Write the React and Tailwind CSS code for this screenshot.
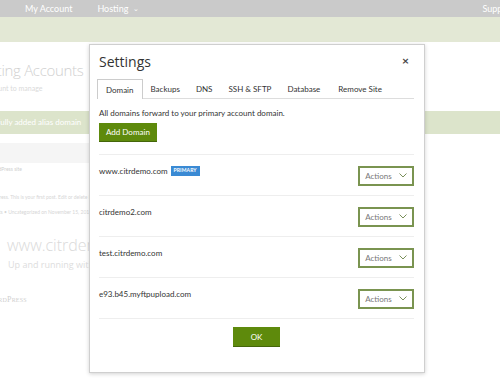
import React from 'react';

const domains = [
  { name: 'www.citrdemo.com', primary: true },
  { name: 'citrdemo2.com' },
  { name: 'test.citrdemo.com' },
  { name: 'e93.b45.myftpupload.com' },
];

const tabs = ['Domain', 'Backups', 'DNS', 'SSH & SFTP', 'Database', 'Remove Site'];

const Chevron = () => (
  <svg width="8" height="5" viewBox="0 0 8 5" fill="none" stroke="#7a8f5a" strokeWidth="1">
    <path d="M0.5 0.5 L4 4 L7.5 0.5" />
  </svg>
);

export default function App() {
  return (
    <div className="relative w-[500px] h-[383px] overflow-hidden bg-white" style={{ fontFamily: 'Lato, "Open Sans", sans-serif' }}>
      {/* pagina de fondo */}
      <div className="h-[17px] bg-[#cacaca] flex items-center text-white text-[9px] whitespace-nowrap">
        <span className="ml-[25px]">My Account</span>
        <span className="ml-[25px] flex items-center gap-[5px]">Hosting <span className="text-[7px]">⌄</span></span>
        <span className="ml-auto mr-[-14px]">Support</span>
      </div>
      <div className="h-[25px] bg-[#e3e8d5]" />

      <div className="pt-[21px] ml-[-29px] text-[#d0d0d0] font-light text-[15px] tracking-[-0.3px] leading-none whitespace-nowrap" style={{ fontFamily: '"Open Sans", sans-serif' }}>
        Hosting Accounts
      </div>
      <div className="mt-[5px] ml-[-50px] text-[#dadada] text-[7px] whitespace-nowrap">Choose an account to manage</div>

      <div className="mt-[17px] h-[23px] bg-[#dce4cb] flex items-center">
        <span className="ml-[-30px] text-white text-[8px] whitespace-nowrap">Successfully added alias domain</span>
      </div>

      <div className="mt-[9px] h-[20px] bg-[#f5f5f5] w-[200px]" />
      <div className="mt-[3px] ml-[-22px] text-[#cfcfcf] text-[5px] whitespace-nowrap">your WordPress site</div>
      <div className="mt-[21px] ml-[-16px] text-[#d6d6d6] text-[5px] whitespace-nowrap">WordPress. This is your first post. Edit or delete it</div>
      <div className="mt-[7px] ml-[-20px] text-[#d6d6d6] text-[5px] whitespace-nowrap">comments • Uncategorized on November 15, 2015</div>
      <div className="mt-[21px] ml-[7px] text-[#dadada] text-[16px] font-light leading-none whitespace-nowrap" style={{ fontFamily: '"Open Sans", sans-serif' }}>
        www.citrdemo.com
      </div>
      <div className="mt-[5px] ml-[8px] text-[#dddddd] text-[9px] whitespace-nowrap" style={{ fontFamily: '"Open Sans", sans-serif' }}>
        Up and running with WordPress
      </div>
      <div className="mt-[22px] ml-[-14px] text-[#cfcfcf] text-[8px] tracking-wide whitespace-nowrap" style={{ fontFamily: '"Liberation Serif", serif', fontVariant: 'small-caps' }}>
        WordPress
      </div>

      {/* Modal */}
      <div className="absolute left-[89px] top-[44px] w-[336px] h-[329px] bg-white border border-[#cfcfcf] shadow-[0_1px_4px_rgba(0,0,0,0.18)] pl-[9px] pr-[10px] flex flex-col">
        <div className="flex items-center justify-between h-[32px]">
          <span className="text-[14px] text-[#333]" style={{ fontFamily: '"Open Sans", sans-serif' }}>Settings</span>
          <span className="text-[12px] font-bold text-[#444] mr-[5px]">×</span>
        </div>

        <div className="mt-[2px] flex items-end border-b border-[#dddddd] h-[20px] text-[8px] text-[#333] whitespace-nowrap ml-[-2px]">
          {tabs.map((t, i) => (
            <div
              key={t}
              className={
                i === 0
                  ? 'h-[20px] px-[8px] flex items-center border border-b-0 border-[#cccccc] bg-white mb-[-1px]'
                  : i === 5
                  ? 'h-[19px] pl-[10px] pr-[8px] flex items-center'
                  : 'h-[19px] px-[8px] flex items-center'
              }
            >
              {t}
            </div>
          ))}
        </div>

        <div className="mt-[8px] h-[12px] flex items-center text-[8px] text-[#333]">All domains forward to your primary account domain.</div>
        <div className="mt-[4px] flex">
          <button className="h-[19px] px-[7px] bg-[#5e8a0c] text-white text-[8px] border-b border-[#44660a]">Add Domain</button>
        </div>

        <div className="mt-[12px] flex flex-col">
          {domains.map((d) => (
            <div key={d.name} className="h-[41px] border-t border-[#eeeeee] flex items-center justify-between">
              <div className="flex items-center gap-[3px] mt-[-8px] text-[8px] text-[#333]">
                {d.name}
                {d.primary && (
                  <span className="bg-[#3a8ad4] text-white text-[5px] font-bold px-[3px] py-[1px] tracking-wide">PRIMARY</span>
                )}
              </div>
              <button className="w-[56px] h-[20px] border-2 border-[#7a9450] flex items-center justify-center gap-[7px] text-[8px] text-[#777] mt-[1px]">
                Actions <Chevron />
              </button>
            </div>
          ))}
          <div className="border-t border-[#eeeeee]" />
        </div>

        <div className="flex justify-center mt-[8px]">
          <button className="w-[47px] h-[20px] bg-[#5e8a0c] text-white text-[8px] border-b border-[#44660a]">OK</button>
        </div>
      </div>
    </div>
  );
}
